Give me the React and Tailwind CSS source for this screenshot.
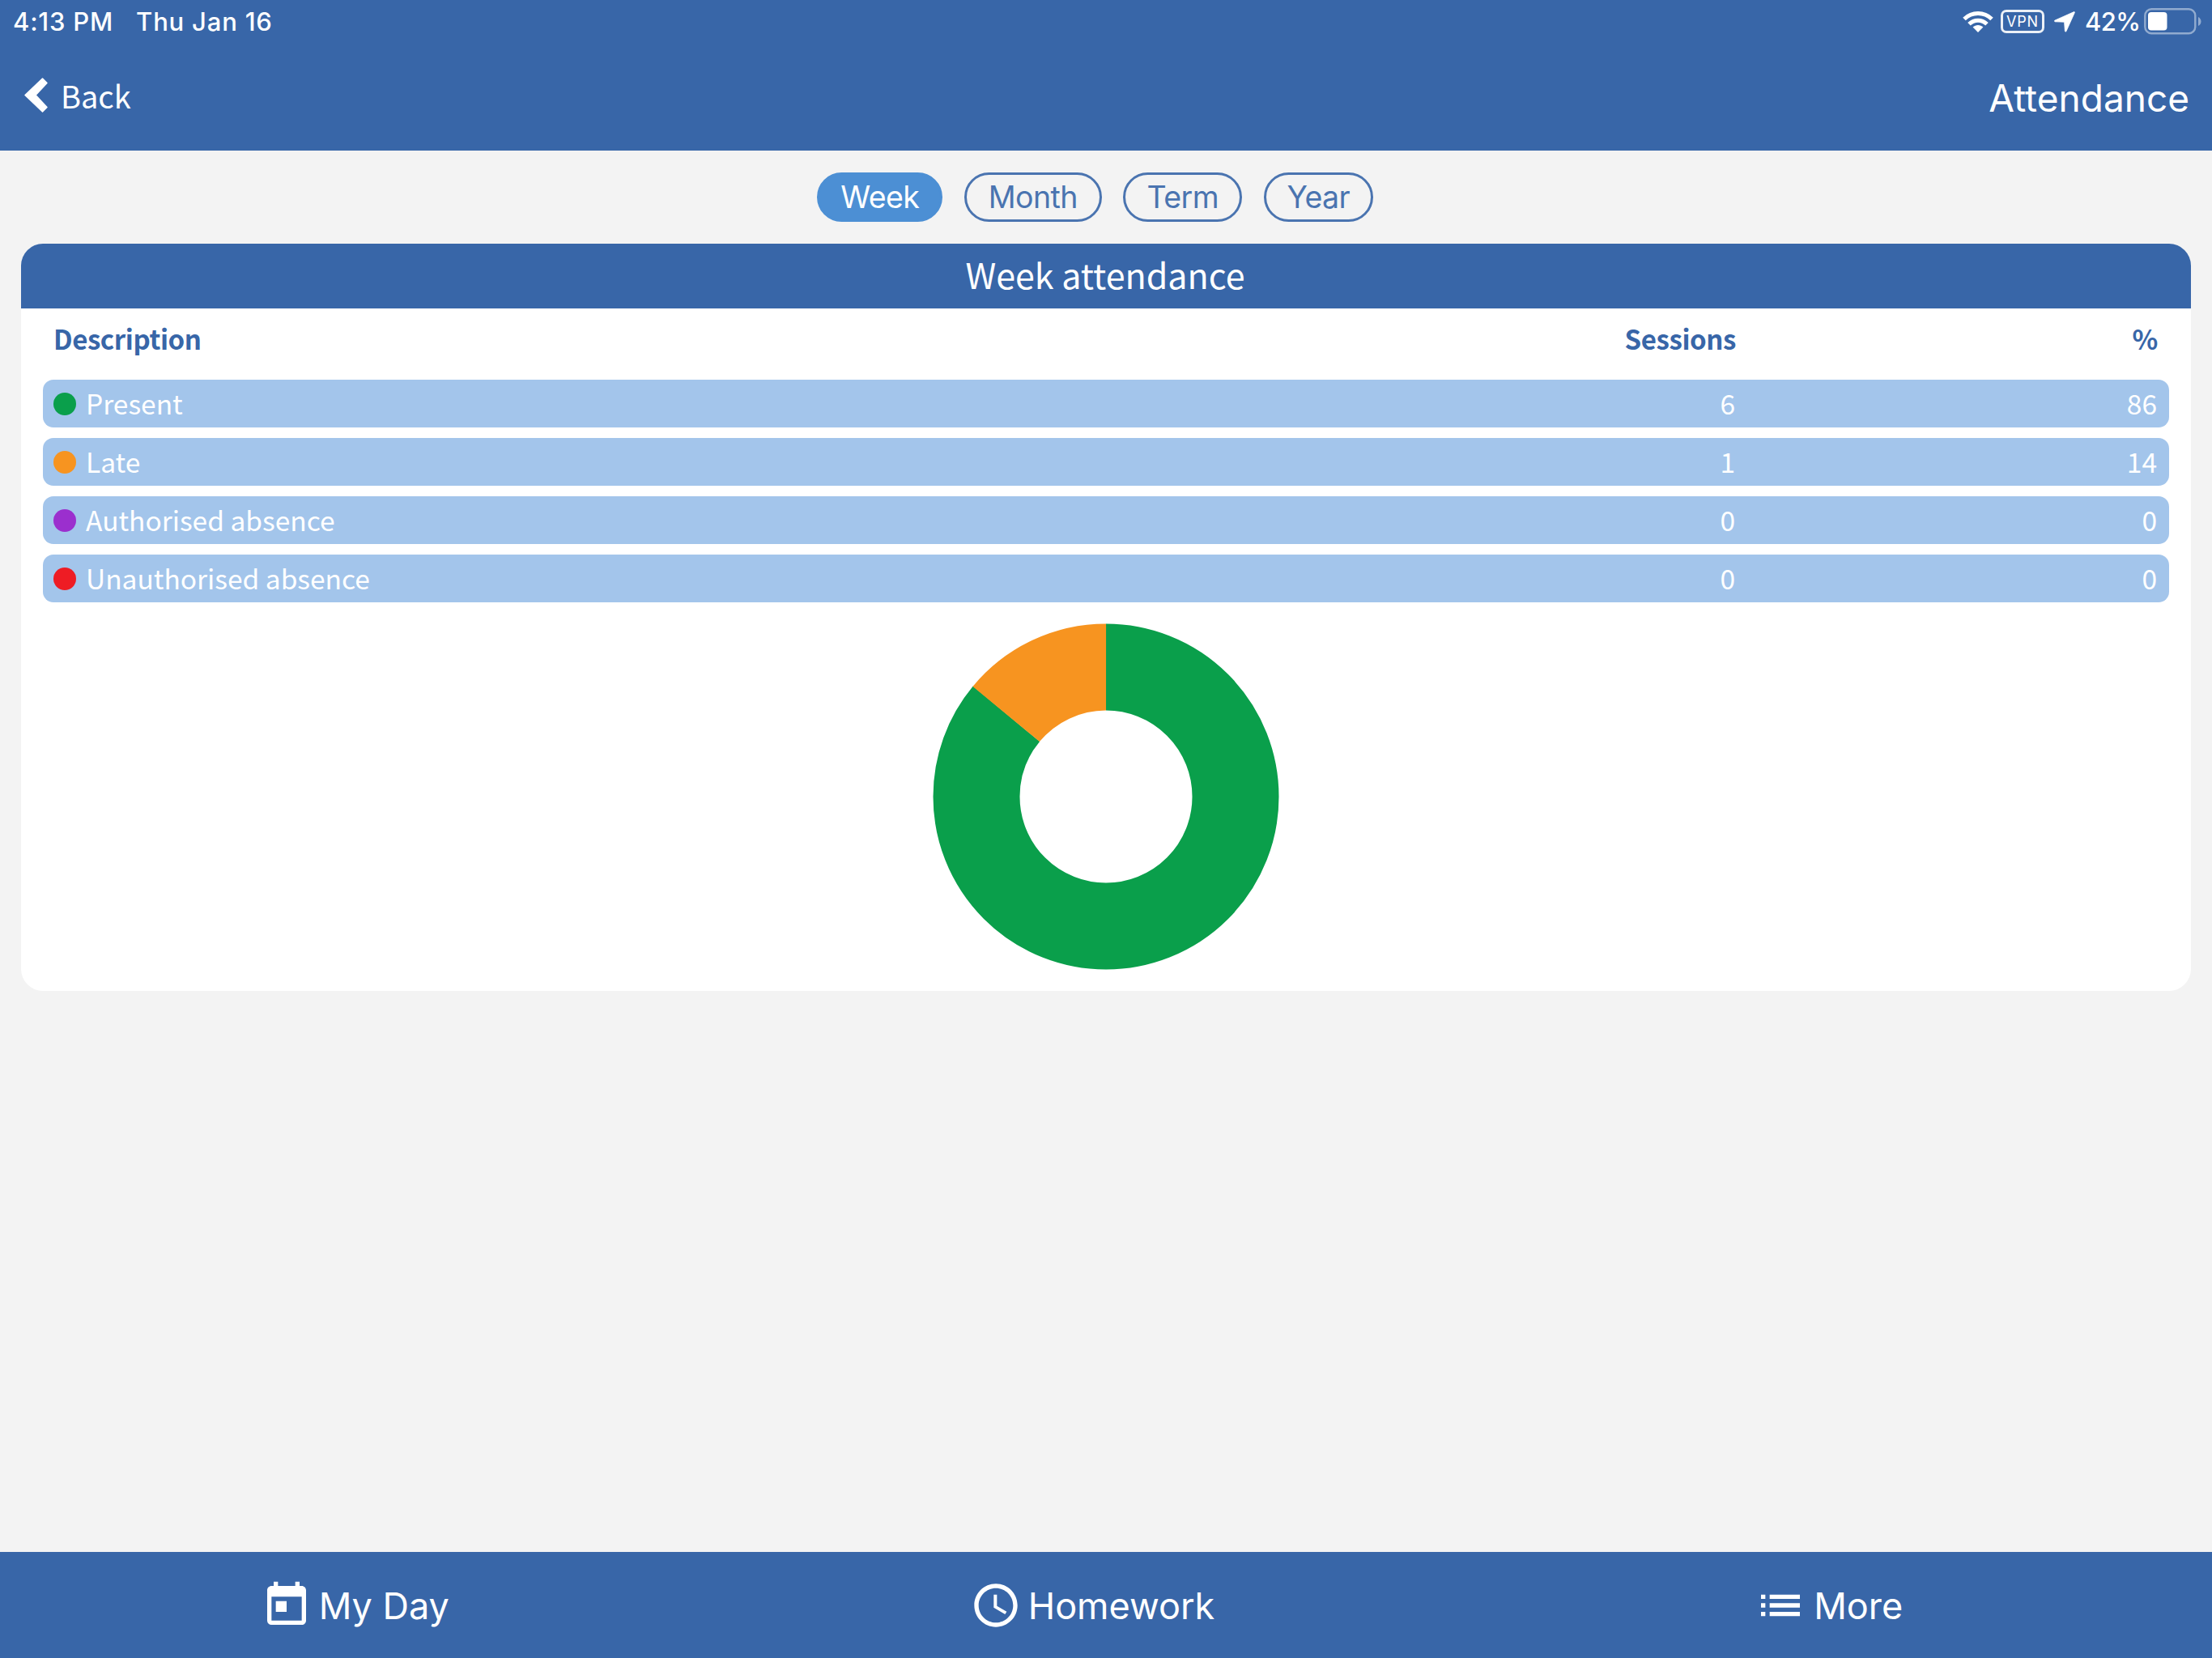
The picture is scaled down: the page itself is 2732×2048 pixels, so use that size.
import { useState } from "react";
import { MdToday, MdAccessTime, MdList } from "react-icons/md";

const sourceFont = "font-['Noto_Sans_CJK_SC',sans-serif]";

const tabs = [
  { name: "Week", width: "w-[155px]" },
  { name: "Month", width: "w-[170px]" },
  { name: "Term", width: "w-[147px]" },
  { name: "Year", width: "w-[135px]" },
];

const rows = [
  { label: "Present", sessions: 6, percent: 86, color: "#0a9f4b" },
  { label: "Late", sessions: 1, percent: 14, color: "#f79420" },
  { label: "Authorised absence", sessions: 0, percent: 0, color: "#9b2fce" },
  { label: "Unauthorised absence", sessions: 0, percent: 0, color: "#ee1c24" },
];

function StatusBar() {
  return (
    <div className="flex h-[53px] items-center justify-between pl-[16px] pr-[12px] text-[31px] font-medium leading-none">
      <div className="flex gap-[28px]">
        <span className="tracking-[0.8px]">4:13 PM</span>
        <span className="tracking-[0.8px]">Thu Jan 16</span>
      </div>
      <div className="flex items-center">
        {/* Wifi */}
        <svg width="38" height="28" viewBox="0 0 38 28" fill="none" stroke="white" strokeWidth="5">
          <path d="M2 10.5C11.5 1.2 26.5 1.2 36 10.5" />
          <path d="M8 16.8C14.3 10.6 23.7 10.6 30 16.8" />
          <path d="M19 27L12.6 20.6C16.2 17.2 21.8 17.2 25.4 20.6Z" fill="white" stroke="none" />
        </svg>
        <span className="ml-[9px] flex h-[29px] w-[54px] items-center justify-center rounded-[7px] border-[3px] border-white/90 text-[18px] font-normal tracking-[0.8px]">
          VPN
        </span>
        {/* Location */}
        <svg className="ml-[12px]" width="26" height="26" viewBox="0 0 26 26" fill="white">
          <path d="M24.6 0.6L0.8 11.2Q0 12 1 12.8L12.6 13.2L13.4 24.6Q14 25.8 14.9 24.8L25.4 1.4Q25.4 0.4 24.6 0.6Z" stroke="white" strokeWidth="0.8" />
        </svg>
        <span className="ml-[12px] w-[67px] whitespace-nowrap tracking-[-0.6px]">42%</span>
        {/* Battery */}
        <svg className="ml-[6px]" width="72" height="33" viewBox="0 0 72 33">
          <rect x="1.3" y="1.3" width="62" height="30" rx="8" fill="none" stroke="white" strokeOpacity="0.45" strokeWidth="2.4" />
          <rect x="5" y="5" width="23.5" height="22.5" rx="4" fill="white" />
          <path d="M67 11Q70.5 13 70.5 16.5Q70.5 20 67 22Z" fill="white" fillOpacity="0.45" />
        </svg>
      </div>
    </div>
  );
}

function Donut() {
  const total = rows.reduce((sum, r) => sum + r.percent, 0);
  const radius = 160;
  const length = 2 * Math.PI * radius;
  let used = 0;

  return (
    <svg width="428" height="428" viewBox="-214 -214 428 428">
      {rows.filter((r) => r.percent > 0).map((r) => {
        const share = r.percent / total;
        const start = used;
        used += share;
        return (
          <circle
            key={r.label}
            r={radius}
            fill="none"
            stroke={r.color}
            strokeWidth="107"
            strokeDasharray={`${share * length} ${length}`}
            transform={`rotate(${start * 360 - 90})`}
          />
        );
      })}
    </svg>
  );
}

export default function App() {
  const [active, setActive] = useState("Week");

  return (
    <div className="flex h-[2048px] w-[2732px] flex-col overflow-hidden bg-[#f3f3f3] font-['Inter',sans-serif]">
      <header className="h-[186px] shrink-0 bg-[#3866a8] text-white">
        <StatusBar />
        <div className="flex h-[133px] items-center justify-between pl-[29px] pr-[28px]">
          <button className="flex items-center gap-[15px]">
            <svg className="mb-[4px]" width="31" height="45" viewBox="0 0 31 45">
              <path
                d="M2 22.5L23.5 2L29 7.5L15 22.5L29 37.5L23.5 43Z"
                fill="white"
                stroke="white"
                strokeWidth="1.5"
                strokeLinejoin="round"
              />
            </svg>
            <span className={`${sourceFont} pb-[3px] text-[38px] leading-none`}>Back</span>
          </button>
          <h1 className="pt-[2px] text-[46px] leading-none">Attendance</h1>
        </div>
      </header>

      <main className="flex-1">
        <div className="flex justify-center gap-[26.5px] pr-[27px] pt-[27px]">
          {tabs.map((t) => (
            <button
              key={t.name}
              onClick={() => setActive(t.name)}
              className={`${t.width} h-[61px] rounded-full border-[3px] text-[37.5px] leading-none tracking-[-0.6px] ${
                active === t.name
                  ? "border-[#4c8fd4] bg-[#4c8fd4] text-white"
                  : "border-[#4a74b0] text-[#4a74b0]"
              }`}
            >
              {t.name}
            </button>
          ))}
        </div>

        <section className={`${sourceFont} mx-[26px] mt-[27px] h-[923px] overflow-hidden rounded-[27px] bg-white`}>
          <h2 className="flex h-[80px] items-center justify-center bg-[#3866a8] pb-[6px] pr-[2px] text-[43px] leading-none text-white">
            Week attendance
          </h2>

          <div className="flex h-[88px] items-center pb-[14px] pl-[40px] pr-[41px] text-[33px] font-bold leading-none tracking-[-0.4px] text-[#3866a8]">
            <span className="flex-1">Description</span>
            <span>Sessions</span>
            <span className="w-[521px] text-right">%</span>
          </div>

          <div className="flex flex-col gap-[13px] px-[27px]">
            {rows.map((r) => (
              <div
                key={r.label}
                className="flex h-[59px] items-center rounded-[13px] bg-[#a3c5eb] pl-[13px] pr-[15px] text-[33.5px] leading-none text-white"
              >
                <span className="h-[28px] w-[28px] rounded-full" style={{ backgroundColor: r.color }} />
                <span className="ml-[12px] flex-1 pb-[2px]">{r.label}</span>
                <span className="pb-[2px]">{r.sessions}</span>
                <span className="w-[521px] pb-[2px] text-right">{r.percent}</span>
              </div>
            ))}
          </div>

          <div className="flex justify-center pt-[26px]">
            <Donut />
          </div>
        </section>
      </main>

      <footer className="grid h-[131px] shrink-0 grid-cols-3 bg-[#3866a8] text-[45px] leading-none text-white">
        <button className="flex items-center justify-center gap-[8px] pr-[34px]">
          <MdToday size={64} />
          <span className="pt-[2px]">My Day</span>
        </button>
        <button className="flex items-center justify-center gap-[8px] pr-[34px]">
          <MdAccessTime size={64} />
          <span className="pt-[2px]">Homework</span>
        </button>
        <button className="flex items-center justify-center gap-[9px] pr-[36px]">
          <MdList size={64} />
          <span className="pt-[2px]">More</span>
        </button>
      </footer>
    </div>
  );
}
